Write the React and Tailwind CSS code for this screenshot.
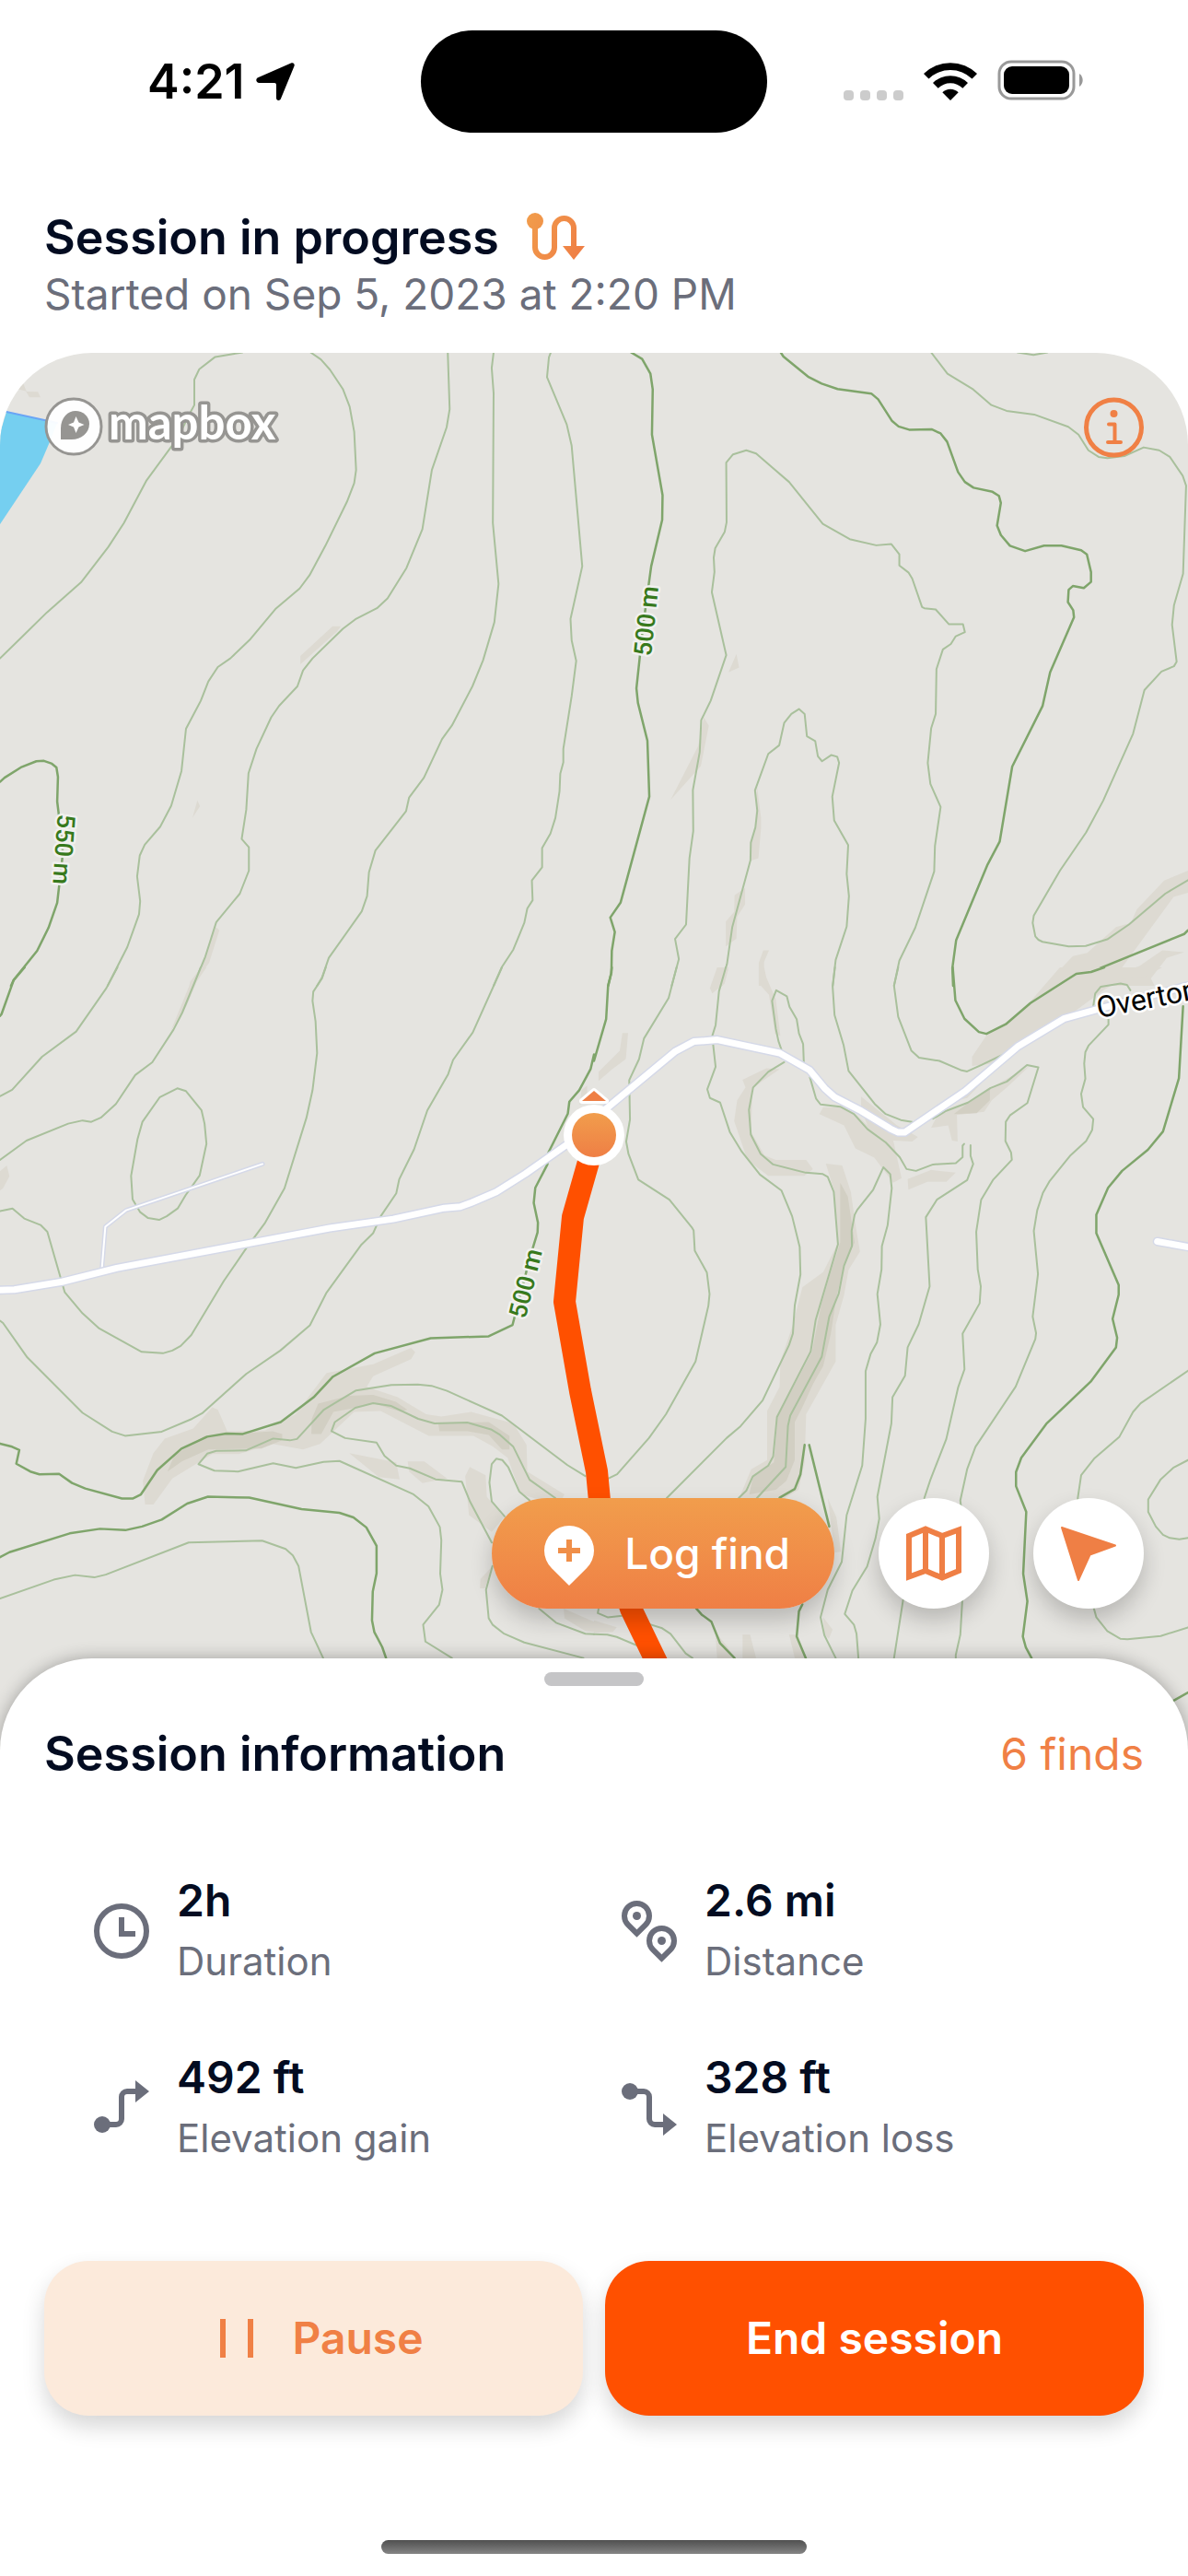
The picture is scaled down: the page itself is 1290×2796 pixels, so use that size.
import React from "react";

// Each tile keeps its shapes in its own extent, the transform puts it on the map.
// shade: hill shading, light / dark: contour lines, road / track: streets
const TILES = [
    {
        id: "nw",
        transform: "translate(0 370) scale(.41135 .44643)",
        shade: [
            "60,100 70,123 100,124 107,137 78,137 68,122 46,117",
            "793,766 878,694 900,694 890,706 793,786",
            "521,1117 528,1131 508,1160",
            "570,1425 579,1433 552,1512 525,1545 510,1568 500,1568 502,1558 530,1525",
        ],
        deep: [],
        light: [
            "640,28 568,39 526,69 513,94 513,156 500,178 470,235 387,339 327,443 286,501 214,587 124,660 60,718 0,772",
            "820,28 847,45 871,70 905,117 923,160 935,221 940,314 935,346 916,391 859,498 817,570 791,602 727,652 659,727 608,772 575,793 550,828 530,875 491,943 479,1046 452,1130 423,1181 382,1225 369,1251 362,1302 370,1362 367,1394 336,1474 284,1568",
            "1182,28 1187,166 1179,210 1140,314 1115,458 1073,552 1023,626 995,650 938,677 905,700 825,772 800,801 785,840 737,887 716,915 677,992 656,1051 650,1140 638,1211 657,1231 657,1288 633,1344 571,1413 542,1497 510,1568",
            "1303,28 1298,66 1303,127 1301,443 1316,591 1305,684 1275,777 1247,840 1193,935 1167,968 1119,1062 1080,1110 1072,1143 991,1239 974,1292 969,1350 955,1387 868,1500 850,1548 837,1568",
            "1454,28 1449,40 1444,88 1496,203 1509,255 1537,548 1506,676 1509,728 1521,778 1509,864 1487,992 1487,1025 1479,1052 1477,1095 1466,1160 1453,1198 1431,1233 1431,1280 1404,1312 1406,1360 1392,1380 1384,1415 1355,1480 1325,1522 1303,1568",
        ],
        dark: [
            "0,1072 12,1062 55,1037 96,1022 116,1021 137,1028 149,1037 153,1060 151,1120 157,1165 166,1245 158,1310 151,1366 128,1427 98,1483 36,1554 29,1568",
        ],
        road: [],
        track: [],
    },
    {
        id: "ne",
        transform: "translate(645 370) scale(.41135 .44643)",
        shade: [
            "376,761 383,794 355,806",
            "290,915 303,936 282,1034 202,1116 275,985",
            "430,1080 441,1160 441,1185 434,1258 414,1264 414,1220 426,1183",
            "399,1330 399,1370 378,1400 376,1453 348,1472 348,1412 370,1388 371,1348",
            "330,1528 355,1528 340,1568 308,1568",
            "447,1482 462,1482 449,1510 449,1568 435,1568 435,1512",
            "1568,1288 1505,1312 1433,1382 1417,1415 1378,1425 1302,1488 1264,1496 1190,1568 1340,1568 1395,1522 1530,1352 1568,1342",
            "1345,1550 1440,1520 1500,1482 1558,1486 1512,1500 1470,1550 1480,1568 1330,1568",
        ],
        deep: [],
        light: [
            "890,28 933,80 1001,118 1049,156 1089,170 1162,179 1252,209 1279,228 1305,266 1332,282 1355,285 1400,280 1451,259 1492,266 1520,282 1554,328 1563,352 1555,566 1531,643 1526,690 1538,780 1531,791 1498,804 1453,849 1423,955 1344,1118 1299,1195 1230,1288 1161,1397 1158,1415 1165,1448 1173,1456 1184,1461 1253,1472 1298,1471 1355,1455 1412,1419 1508,1344 1568,1311",
            "1118,28 1160,34 1197,28",
            "205,1568 224,1503 214,1454 243,1419 252,1258 262,1192 261,1092 279,1000 283,922 308,875 349,764 311,611 318,562 316,527 320,504 345,464 350,441 349,296 367,276 402,266 428,274 515,343 604,445 675,482 745,497 785,494 806,519 806,546 830,563 840,578 866,647 872,650 902,653 937,689 974,689 979,708 955,718 942,737 921,750 904,798 902,907 890,942 881,1026 888,1077 915,1133 900,1228 898,1290 848,1427 806,1507 792,1568",
            "334,1568 351,1515 365,1425 413,1263 414,1220 426,1183 431,1142 425,1093 460,1004 489,983 502,929 521,907 541,895 556,907 562,961 584,973 591,1010 602,1022 626,1007 642,1011 647,1026 629,1108 634,1166 671,1226 667,1296 673,1350 667,1424 638,1505 630,1568",
        ],
        dark: [
            "98,28 127,44 149,80 155,118 153,228 181,375 180,435 151,548 130,690 112,845 116,880 141,972 146,1108 70,1366 43,1402 55,1437 47,1483 46,1536 37,1568",
            "493,28 500,38 565,87 601,104 643,117 732,128 750,142 787,195 804,208 832,216 891,215 915,225 932,245 961,319 979,343 1002,357 1052,367 1069,377 1074,394 1064,449 1074,472 1098,498 1138,511 1188,498 1234,498 1286,509 1301,519 1312,562 1312,586 1293,601 1264,596 1253,605 1251,635 1265,655 1267,672 1204,806 1184,888 1104,1035 1071,1217 1039,1273 956,1457 946,1525 948,1568",
            "1222,1568 1275,1539 1312,1534 1558,1442 1568,1433",
        ],
        road: [],
        track: [],
    },
    {
        id: "sw",
        transform: "translate(0 1050) scale(.41135 .49745)",
        shade: [
            "18,432 25,456 8,482 0,487 0,445",
            "530,0 545,0 520,30 492,85 450,140 485,70 502,35",
            "1085,830 1096,840 1085,855 985,892 968,915 1050,938 1125,975 1165,980 1244,970 1355,995 1390,1042 1392,1100 1490,1150 1480,1165 1440,1165 1375,1150 1340,1070 1300,1045 1250,1022 1132,1022 1005,968 935,970 845,1040 800,1052 720,1040 630,1062 560,1062 455,1115 405,1172 383,1172 377,1120 405,1060 435,1028 510,1006 560,960 575,965 600,1012 700,1010 780,975 862,885 985,866",
            "922,1060 1046,1080 1055,1117 1000,1112",
            "1076,1078 1120,1078 1180,1115 1115,1125 1080,1100",
            "1240,1090 1282,1108 1285,1155 1330,1200 1298,1232 1238,1195 1228,1110",
            "1300,1306 1280,1355 1267,1355 1268,1335",
            "1488,1399 1568,1428 1568,1450 1545,1448 1490,1420",
            "1535,268 1550,258 1550,290 1530,300",
        ],
        deep: [
            "442,1100 460,1065 540,1022 720,1012 745,1018 745,1032 690,1050 550,1052 480,1078",
            "822,1018 823,985 840,952 920,935 985,933 1045,948 1075,965 1060,970 985,951 938,961 880,970 848,1018",
            "1157,995 1290,992 1345,1022 1345,1052 1325,1052 1290,1020 1234,1012 1160,1012",
        ],
        light: [
            "310,0 281,45 201,140 111,195 32,267 0,281",
            "530,0 481,99 458,136 402,207 357,235 306,298 266,328 241,337 218,334 180,341 70,378 0,420",
            "860,0 850,24 827,53 825,73 833,118 837,187 825,268 809,328 751,482 700,557 650,613 591,684 505,802 477,826 455,836 430,842 374,839 262,788 218,755 171,709 125,577 107,562 64,548 33,526 0,532",
            "1325,0 1248,142 1196,202 1183,233 1128,312 1093,397 1054,462 1046,493 1005,543 985,580 954,605 861,711 818,781 740,836 650,887 535,972 507,985 427,1013 330,1022 296,1013 218,972 72,851 8,776 0,771",
            "468,264 491,270 532,312 540,341 545,385 527,454 490,497 469,526 440,543 420,551 391,547 370,534 350,506 346,455 363,375 376,337 422,283 468,264",
            "0,1377 142,1336 198,1326 249,1331 279,1325 498,1255 692,1251 754,1269 773,1283 788,1306 821,1450 853,1507",
            "1545,1110 1498,1086 1325,978 1180,924 1139,913 1103,910 1033,911 940,923 855,965 784,1029 765,1032 721,1028 649,1054 571,1055 547,1061 524,1084 566,1098 628,1100 721,1082 781,1092 854,1079 896,1077 1090,1149 1131,1176 1161,1221 1165,1250 1162,1323 1168,1358 1159,1391 1117,1434 1123,1471 1193,1507",
            "1466,1158 1398,1118 1355,1046 1320,1020 1296,1008 1234,993 1147,995 1104,985 1033,957 985,951 938,961 884,992 875,1012 911,1027 994,1037 1015,1066 1046,1087 1082,1093 1150,1117 1219,1122 1241,1166 1298,1255",
            "1398,1163 1371,1144 1342,1091 1326,1075 1310,1072 1298,1084 1292,1124 1298,1165 1332,1198",
            "1300,1306 1283,1358 1290,1420 1300,1434 1329,1453 1384,1473 1540,1507",
            "1423,1399 1468,1430 1545,1454 1568,1455",
        ],
        dark: [
            "65,0 36,28 4,102 0,106",
            "1568,190 1559,222 1529,268 1503,293 1499,319 1447,405 1445,430 1413,481 1409,514 1420,557 1419,578 1400,630 1353,780 1290,805 1137,809 989,842 879,893 828,938 741,992 641,1018 597,1017 547,1024 479,1050 415,1097 372,1150 350,1159 322,1159 225,1137 190,1125 156,1105 104,1106 80,1100 43,1083 51,1053 32,1046 0,1039",
            "0,1287 25,1276 184,1235 264,1225 331,1228 375,1220 427,1205 494,1170 549,1155 658,1157 796,1182 896,1190 933,1200 967,1222 994,1262 994,1322 984,1362 982,1425 988,1450 1009,1483 1019,1507",
        ],
        road: ["0,704 38,703 164,686 308,656 870,569 1038,549 1173,525 1215,522 1245,513 1310,490 1387,450 1568,345"],
        track: ["269,656 278,566 333,530 693,429"],
    },
    {
        id: "se",
        transform: "translate(645 1050) scale(.41135 .49745)",
        shade: [
            "306,45 325,0 355,0 345,35 312,57",
            "435,0 449,0 455,22 480,70 492,150 478,145 462,60 435,35",
            "75,143 90,143 84,200 48,222 12,248 12,228 68,182",
            "455,220 490,222 445,248 418,265 415,360 450,410 480,420 560,420 578,440 555,455 460,455 405,420 370,335 378,290 400,262 392,245",
            "612,428 655,432 678,490 690,560 702,620 672,660 660,715 638,780 638,860 560,975 556,1080 540,1140 490,1165 380,1165 415,1095 457,1075 457,968 490,915 492,860 525,780 550,698 605,665 645,600 635,490",
            "705,282 800,345 855,370 840,380 790,378 812,460 790,470 740,415 690,395 660,345 595,320 605,305 650,305 690,320 722,345 705,310",
            "828,462 890,442 955,448 930,468 880,468 830,485",
            "1230,0 1500,0 1450,22 1395,25 1345,50 1180,150 1095,190 985,285 960,290 1050,210 998,215 998,195 1035,150 1120,105",
            "1150,215 1090,262 1050,290 1030,315 958,322 960,380 945,378 935,345 890,350 905,325 987,295 1047,263",
            "617,1158 640,1200 652,1275 635,1277",
            "320,1450 350,1480 372,1507 325,1507",
            "392,1456 412,1456 428,1507 392,1507",
            "515,1456 535,1456 560,1507 530,1507",
            "605,1418 630,1445 620,1465 608,1455",
            "0,1425 60,1440 50,1450 0,1452",
        ],
        deep: [
            "650,470 670,500 688,600 660,650 640,720 625,800 605,870 560,935 530,990 530,1075 508,1120 480,1140 410,1150 420,1110 475,1080 485,980 575,840 600,735 625,665 650,600",
            "520,960 583,880 583,900 550,960 525,1000 528,1070 495,1110 510,1050",
            "1045,262 1045,290 1010,318 950,320 985,297",
        ],
        light: [
            "218,0 197,67 132,155 119,200 93,246 95,332 85,380 91,407 117,463 199,507 258,567 263,574 266,618 298,666 305,713 302,738 268,860 190,975 145,1027 61,1106 36,1116",
            "348,0 330,52 321,126 312,150 321,217 299,266 306,285 333,295 359,360 390,402 438,452 495,487 523,543 543,610 545,670 530,737 525,799 515,824 445,945 387,1001 350,1027 192,1158",
            "502,207 460,228 420,262 409,311 414,365 440,407 473,430 559,448 604,451 617,457 633,490 644,604 585,770 572,838 483,981 473,1067 460,1087 419,1111 402,1142 382,1158",
            "495,180 487,161 480,134 470,73 481,50 509,63 516,86 535,113 541,144 552,167 554,210",
            "570,240 586,286 598,299 650,304 686,320 722,353 770,382 807,414 825,440 850,444 895,430 955,427 973,414 973,389 977,385",
            "994,388 994,411 1001,429 985,464 905,507 876,545 886,696 857,779 828,829 821,891 788,938 785,995 748,1155 753,1203 743,1246 721,1307 682,1360 662,1411 686,1434 693,1454 698,1507",
            "636,0 630,43 635,104 659,170 672,226 741,298 770,320 810,333 840,337",
            "803,0 792,40 803,108 838,182 858,197 912,204 968,224 985,227 1023,213 1130,170",
            "895,330 930,313 987,295 1047,263 1090,249 1143,213 1173,218 1144,296 1098,323 1087,337 1086,379 1101,404 1103,420 1054,463 1022,507 1009,577 1013,659 1021,696 1018,733 973,799 978,877 961,917 930,1029 888,1118 872,1158",
            "1317,90 1323,57 1338,42 1390,35 1407,38 1416,50",
            "1358,110 1358,125 1306,170 1297,185 1294,210 1297,243 1286,276 1291,305 1318,331 1315,355 1299,379 1258,410 1203,466 1185,492 1170,530 1161,575 1172,669 1158,762 1167,798 1165,811 1113,915 1007,1046 985,1095 967,1163 972,1200 972,1385 967,1456 955,1500 955,1507",
            "430,1158 506,1090 512,1000 518,978 601,850 621,762 646,712 660,651 681,608 680,575 688,540 695,529 737,485 764,436 782,451 786,482 775,563 760,608 759,659 748,713 756,779 747,818 730,844 717,881 717,985 708,1087 667,1195 654,1297 617,1358 598,1418 608,1457 638,1507",
            "12,1400 10,1409 36,1418 80,1414",
            "0,1455 35,1456 60,1461 115,1480",
            "150,1434 180,1442 202,1454 242,1497 260,1507",
            "816,1380 792,1507",
            "1568,880 1443,951 1423,970 1387,1024 1320,1072 1286,1108 1277,1158 1280,1300 1315,1385 1326,1418 1355,1448 1390,1465 1408,1466 1496,1459 1568,1440",
            "1568,1075 1529,1092 1496,1117 1463,1161 1463,1188 1483,1220 1502,1238 1520,1245 1545,1248 1568,1245",
        ],
        dark: [
            "47,0 45,14 37,42 32,113 0,204",
            "947,0 954,72 978,112 1016,141 1036,145 1087,124 1152,78 1273,14 1312,10 1347,0",
            "490,1157 530,1138 545,1106 556,1042",
            "568,1042 621,1220",
            "550,1390 541,1405 535,1460 559,1507",
            "270,1399 284,1412 310,1428 333,1475 371,1507",
            "1555,85 1544,242 1502,358 1462,398 1394,444 1357,481 1326,540 1326,580 1385,693 1385,714 1369,767 1381,808 1378,829 1311,904 1194,996 1128,1070 1114,1101 1114,1132 1141,1188 1133,1323 1144,1383 1132,1460 1140,1484 1155,1507",
            "1568,1582 1530,1600",
        ],
        road: [
            "0,330 40,303 215,183 263,162 326,158 490,187 569,224 609,264 635,283 705,313 782,352 803,360 820,360 980,270 1118,173 1240,112 1330,91 1568,40",
            "1487,598 1568,610",
        ],
        track: [],
    },
];

const LABELS = [
    { text: "500 m", x: 702, y: 674, angle: -84 },
    { text: "500 m", x: 571, y: 1393, angle: -76 },
    { text: "550 m", x: 69, y: 922, angle: 94 },
];

function Lines({ points, className }) {
    return points.map((p) => (
        <polyline key={p} points={p} vectorEffect="non-scaling-stroke" className={className} />
    ));
}

function MapView() {
    return (
        <svg viewBox="0 383 1290 1557" preserveAspectRatio="xMidYMin slice" className="absolute inset-0 h-full w-full" fill="none" strokeLinejoin="round" strokeLinecap="round">
            <defs>
                <linearGradient id="puck" x1="0" y1="0" x2="0" y2="1">
                    <stop offset="0" stopColor="#f19d4c" />
                    <stop offset="1" stopColor="#ef7f45" />
                </linearGradient>
            </defs>

            <path d="M0 569L44 503 53 482 62 459 7 447 0 470z" fill="#75cff0" />
            <path d="M7 447L62 459" stroke="#6aa5f5" strokeWidth="2" />

            {TILES.map((tile) => (
                <g key={tile.id} transform={tile.transform}>
                    {tile.shade.map((p) => (
                        <polygon key={p} points={p} className="fill-[#dddad2]" />
                    ))}
                    {tile.deep.map((p) => (
                        <polygon key={p} points={p} className="fill-[#d2cfc3]" />
                    ))}
                    <Lines points={tile.light} className="stroke-[#a9c09c] stroke-2" />
                    <Lines points={tile.dark} className="stroke-[#7fa56b] stroke-[2.5px]" />
                </g>
            ))}
            {TILES.map((tile) => (
                <g key={tile.id} transform={tile.transform}>
                    <Lines points={tile.track} className="stroke-[#d5d9e8] stroke-[5px]" />
                    <Lines points={tile.track} className="stroke-white stroke-2" />
                    <Lines points={tile.road} className="stroke-[#d5d9e8] stroke-[10px]" />
                </g>
            ))}
            {TILES.map((tile) => (
                <g key={tile.id} transform={tile.transform}>
                    <Lines points={tile.road} className="stroke-white stroke-[7px]" />
                </g>
            ))}

            {LABELS.map((label) => (
                <text
                    key={label.x}
                    transform={`translate(${label.x} ${label.y}) rotate(${label.angle})`}
                    textAnchor="middle"
                    dominantBaseline="central"
                    paintOrder="stroke"
                    className="fill-[#37791c] stroke-[#f1f1ee] stroke-[5px] font-['Roboto',sans-serif] text-[27px] font-medium"
                >
                    {label.text}
                </text>
            ))}
            <text
                transform="translate(1193 1105) rotate(-11)"
                paintOrder="stroke"
                className="fill-black stroke-white stroke-[5px] font-['Roboto',sans-serif] text-[32px]"
            >
                Overton
            </text>

            <path d="M645 1240L622 1321 613 1413 630 1510 648 1597 653 1650 685 1746 711 1800 760 1900" stroke="#ff5000" strokeWidth="24" />
            <path d="M645 1184L658 1195H632z" fill="#ef7f45" stroke="#fff" strokeWidth="6" paintOrder="stroke" />
            <circle cx="645" cy="1232" r="33" fill="#fff" />
            <circle cx="645" cy="1232" r="24" fill="url(#puck)" />
        </svg>
    );
}

function MapboxLogo() {
    return (
        <svg viewBox="0 0 270 72" className="h-[72px] w-[270px]" role="img" aria-label="Mapbox">
            <circle cx="32" cy="32" r="30" fill="#fff" fillOpacity=".95" stroke="#969592" strokeWidth="3" />
            <path d="M18 46V34C18 22 26 15 34 15c8 0 15 6 15 14 0 10-9 17-19 17z" fill="#969592" />
            <path d="M34.500 21l3 6.500 6 2.500-6 2.500-3 6.500-2.500-6.500L26 30l6-2.500z" fill="#fff" />
            <text x="70" y="46" paintOrder="stroke" strokeLinejoin="round" className="fill-white stroke-[#969592] stroke-[7px] font-['Lato',sans-serif] text-[51px] font-bold">
                mapbox
            </text>
        </svg>
    );
}

function Icon({ children, className = "" }) {
    return (
        <svg viewBox="0 0 72 72" className={`size-[72px] shrink-0 ${className}`} fill="none" stroke="currentColor" strokeWidth="6" aria-hidden="true">
            {children}
        </svg>
    );
}

const STATS = [
    {
        label: "Duration",
        value: "2h",
        icon: (
            <>
                <circle cx="36" cy="36" r="27" />
                <path d="M36 21v18h15" />
            </>
        ),
    },
    {
        label: "Distance",
        value: "2.6 mi",
        icon: (
            <>
                <path d="M22.500 38.600l-9.550-9.550a13.500 13.500 0 1 1 19.100 0z" />
                <circle cx="22.500" cy="19.500" r="4.500" fill="currentColor" stroke="none" />
                <path d="M49.500 65.600l-9.550-9.550a13.500 13.500 0 1 1 19.100 0z" />
                <circle cx="49.500" cy="46.500" r="4.500" fill="currentColor" stroke="none" />
            </>
        ),
    },
    {
        label: "Elevation gain",
        value: "492 ft",
        icon: (
            <>
                <circle cx="15" cy="54" r="9" fill="currentColor" stroke="none" />
                <path d="M15 54h15a6 6 0 0 0 6-6V24a6 6 0 0 1 6-6h12" />
                <path d="M51 6l15 12-15 12z" fill="currentColor" stroke="none" />
            </>
        ),
    },
    {
        label: "Elevation loss",
        value: "328 ft",
        icon: (
            <>
                <circle cx="15" cy="18" r="9" fill="currentColor" stroke="none" />
                <path d="M15 18h15a6 6 0 0 1 6 6v24a6 6 0 0 0 6 6h12" />
                <path d="M51 42l15 12-15 12z" fill="currentColor" stroke="none" />
            </>
        ),
    },
];

function StatusBar() {
    return (
        <div className="grid grid-cols-[1fr_376px_1fr] items-center pt-[33px] text-black">
            <div className="flex items-center gap-3 pl-[160px]">
                <span className="text-[52px] leading-none font-semibold">4:21</span>
                <svg viewBox="0 0 42 42" className="size-[42px]" aria-hidden="true">
                    <path d="M38 .6c2.400-1.200 4.400.8 3.500 3.200L27 39c-1.200 3-5 2.500-5-.8V24a2 2 0 0 0-2-2H3.500C.2 22-1 18 2 16.300z" />
                </svg>
            </div>
            <div className="h-[111px] rounded-full bg-black" />
            <div className="flex items-end justify-end gap-[22px] pr-28 pb-1">
                <div className="flex gap-[7px]">
                    <i className="size-[11px] rounded bg-[#cccccc]" />
                    <i className="size-[11px] rounded bg-[#cccccc]" />
                    <i className="size-[11px] rounded bg-[#cccccc]" />
                    <i className="size-[11px] rounded bg-[#cccccc]" />
                </div>
                <svg viewBox="0 0 58 42" className="h-[42px] w-[58px]" aria-hidden="true">
                    <path d="M0 13a41.500 41.500 0 0 1 58 0l-5.500 5.500a34 34 0 0 0-47 0z" />
                    <path d="M10 23a27 27 0 0 1 38 0l-5.700 5.700a19 19 0 0 0-26.600 0z" />
                    <path d="M20.300 33.200a12.500 12.500 0 0 1 17.400 0L29 42z" />
                </svg>
                <svg viewBox="0 0 95 44" className="h-[44px] w-[95px]" aria-hidden="true">
                    <rect x="2" y="2" width="81" height="40" rx="13" fill="none" stroke="#999" strokeWidth="3" />
                    <rect x="7" y="7" width="71" height="30" rx="9" />
                    <path d="M89 15a8.500 8.500 0 0 1 0 14z" fill="#999" />
                </svg>
            </div>
        </div>
    );
}

function App() {
    return (
        <div className="flex min-h-screen flex-col bg-white font-['Inter',sans-serif] text-[#030c21]">
            <StatusBar />

            <header className="px-12 pt-[78px] pb-[39px]">
                <div className="flex items-center gap-6">
                    <h1 className="text-[52px] leading-[72px] font-semibold">Session in progress</h1>
                    <svg viewBox="0 0 72 72" className="size-[72px]" aria-hidden="true">
                        <defs>
                            <linearGradient id="route" gradientUnits="userSpaceOnUse" x1="6" y1="20" x2="66" y2="50">
                                <stop offset="0" stopColor="#f19b4b" />
                                <stop offset="1" stopColor="#ef7f45" />
                            </linearGradient>
                        </defs>
                        <circle cx="15" cy="18" r="9" fill="url(#route)" />
                        <path d="M15 18v28.500a10.500 10.500 0 0 0 21 0v-21a10.500 10.500 0 0 1 21 0V46" fill="none" stroke="url(#route)" strokeWidth="6" />
                        <path d="M45 45h24L57 60z" fill="url(#route)" />
                    </svg>
                </div>
                <p className="text-[46px] leading-[50px] text-[#6b6e7b]">Started on Sep 5, 2023 at 2:20 PM</p>
            </header>

            <section className="relative flex flex-1 flex-col justify-between overflow-hidden rounded-t-[100px] bg-[#e5e4e0] px-12 pt-12 pb-[194px]">
                <MapView />
                <div className="relative flex items-start justify-between">
                    <MapboxLogo />
                    <button type="button" aria-label="Map information" className="text-[#f08045]">
                        <svg viewBox="0 0 66 66" className="size-[66px]" fill="none" stroke="currentColor" strokeWidth="5" strokeLinecap="round" strokeLinejoin="round">
                            <circle cx="33.500" cy="33" r="30" />
                            <circle cx="33.500" cy="18" r="4" fill="currentColor" stroke="none" />
                            <path d="M28 29.500h6.500v19M27 49h14" strokeWidth="4" />
                        </svg>
                    </button>
                </div>
                <div className="relative flex items-center justify-end gap-12">
                    <button type="button" className="flex h-[120px] items-center gap-6 rounded-full bg-linear-to-b from-[#f19d4c] to-[#ef7f45] px-12 text-[46px] font-medium text-white shadow-[0_12px_24px_rgba(0,0,0,0.2)]">
                        <svg viewBox="0 0 72 72" className="size-[72px]" aria-hidden="true">
                            <path d="M36 71L16.900 52.100a27 27 0 1 1 38.200 0z" fill="#fff" />
                            <path d="M36 21v24M24 33h24" stroke="#f08f49" strokeWidth="6" />
                        </svg>
                        Log find
                    </button>
                    <button type="button" aria-label="Map style" className="flex size-[120px] items-center justify-center rounded-full bg-white text-[#ef7f45] shadow-[0_12px_24px_rgba(0,0,0,0.2)]">
                        <Icon>
                            <path d="M9 17l18-7.500L45 17l18-6.500V55l-18 7.500L27 55 9 61.500z" />
                            <path d="M27 9.500V55M45 17v45" />
                        </Icon>
                    </button>
                    <button type="button" aria-label="Center on my location" className="flex size-[120px] items-center justify-center rounded-full bg-white text-[#ef7f45] shadow-[0_12px_24px_rgba(0,0,0,0.2)]">
                        <Icon>
                            <path d="M7 8l58 19.500L37.500 37.500 25 65z" fill="currentColor" strokeWidth="2" strokeLinejoin="round" />
                        </Icon>
                    </button>
                </div>
            </section>

            <section className="relative -mt-[140px] rounded-t-[100px] bg-white pt-[15px] pb-6 shadow-[0_0_18px_rgba(0,0,0,0.3)]">
                <div className="mx-auto h-[15px] w-[108px] rounded-full bg-[#c5c5c7]" />
                <div className="mt-11 flex items-center justify-between px-12 leading-[60px]">
                    <h2 className="text-[52px] font-semibold">Session information</h2>
                    <a href="#finds" className="text-[48px] text-[#f08045]">6 finds</a>
                </div>

                <dl className="mt-24 grid grid-cols-2 gap-y-[60px] px-[72px]">
                    {STATS.map((stat) => (
                        <div key={stat.label} className="flex items-center gap-6 pl-6">
                            <Icon className="text-[#6b6e7b]">{stat.icon}</Icon>
                            <div className="flex flex-col-reverse leading-[66px]">
                                <dt className="text-[42px] text-[#6b6e7b]">{stat.label}</dt>
                                <dd className="text-[48px] font-semibold">{stat.value}</dd>
                            </div>
                        </div>
                    ))}
                </dl>

                <div className="mt-[100px] grid grid-cols-2 gap-6 px-12 text-[48px] font-semibold">
                    <button type="button" className="flex h-[168px] items-center justify-center gap-6 rounded-[48px] bg-[#fceadb] text-[#f08045] shadow-[0_12px_24px_rgba(0,0,0,0.16)]">
                        <Icon>
                            <path d="M21 15v42M51 15v42" />
                        </Icon>
                        Pause
                    </button>
                    <button type="button" className="h-[168px] rounded-[48px] bg-[#ff5000] text-white shadow-[0_12px_24px_rgba(0,0,0,0.16)]">
                        End session
                    </button>
                </div>

                <div className="mx-auto mt-[135px] h-[15px] w-[462px] rounded-full bg-linear-to-b from-[#505050] to-[#858585]" />
            </section>
        </div>
    );
}

export default App;
